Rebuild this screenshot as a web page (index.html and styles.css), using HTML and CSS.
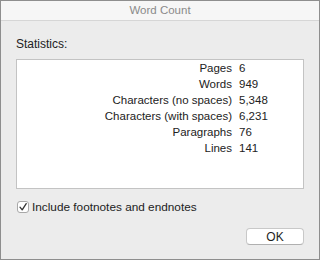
FILE: index.html
```html
<!DOCTYPE html>
<html lang="en">
<head>
    <meta charset="UTF-8">
    <meta name="viewport" content="width=device-width, initial-scale=1.0">
    <title>Word Count</title>
    <link rel="stylesheet" href="styles.css">
</head>
<body>
    <div class="window">
        <header class="titlebar">Word Count</header>
        <div class="content">
            <div class="section-label">Statistics:</div>
            <div class="stats">
                <span class="stat-name">Pages</span><span class="stat-value">6</span>
                <span class="stat-name">Words</span><span class="stat-value">949</span>
                <span class="stat-name">Characters (no spaces)</span><span class="stat-value">5,348</span>
                <span class="stat-name">Characters (with spaces)</span><span class="stat-value">6,231</span>
                <span class="stat-name">Paragraphs</span><span class="stat-value">76</span>
                <span class="stat-name">Lines</span><span class="stat-value">141</span>
            </div>
            <label class="check-row">
                <span class="checkbox">
                    <svg width="10" height="10" viewBox="0 0 10 10">
                        <path d="M2 5.2 L4.2 7.8 L8.2 1.6" fill="none" stroke="#333" stroke-width="1.3" stroke-linecap="round" stroke-linejoin="round"/>
                    </svg>
                </span>
                <span>Include footnotes and endnotes</span>
            </label>
            <div class="actions">
                <button class="btn">OK</button>
            </div>
        </div>
    </div>
</body>
</html>
```

FILE: styles.css
```css
        * {
            box-sizing: border-box;
        }
        body {
            margin: 0;
            font-family: "Liberation Sans", Arial, sans-serif;
            font-size: 11.5px;
            color: #222222;
        }
        .window {
            width: 320px;
            height: 260px;
            border: 1px solid #8e8e8e;
            background-color: #ececec;
        }
        .titlebar {
            height: 20px;
            line-height: 19px;
            text-align: center;
            color: #8a8a8a;
            background-color: #f6f6f6;
            border-bottom: 1px solid #d6d6d6;
        }
        .content {
            padding: 0 15px;
        }
        .section-label {
            margin-top: 15px;
            font-size: 12px;
            line-height: 16px;
        }
        .stats {
            margin-top: 7px;
            height: 130px;
            background-color: #ffffff;
            border: 1px solid #c3c3c3;
            display: grid;
            grid-template-columns: 215px 1fr;
            grid-auto-rows: 16px;
            column-gap: 7px;
            align-content: start;
            line-height: 16px;
        }
        .stat-name {
            text-align: right;
        }
        .check-row {
            margin-top: 10px;
            display: flex;
            align-items: center;
            gap: 3px;
            font-size: 11.8px;
            line-height: 16px;
        }
        .checkbox {
            width: 12px;
            height: 12px;
            margin-left: 1px;
            background-color: #ffffff;
            border: 1px solid #a8a8a8;
            border-radius: 3px;
            display: flex;
            align-items: center;
            justify-content: center;
        }
        .actions {
            margin-top: 13px;
            display: flex;
            justify-content: flex-end;
        }
        .btn {
            width: 58px;
            height: 17px;
            padding: 0;
            font-family: inherit;
            font-size: 12px;
            color: #1e1e1e;
            background-color: #ffffff;
            border: 1px solid #c8c8c8;
            border-bottom-color: #b0b0b0;
            border-radius: 4px;
        }
```
